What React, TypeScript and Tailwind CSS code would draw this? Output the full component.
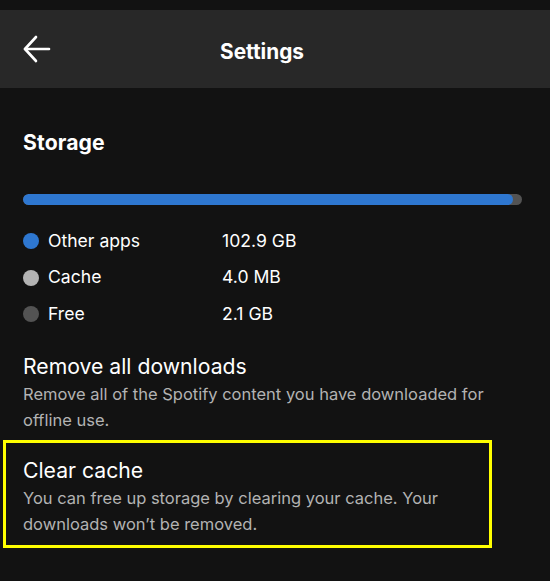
import React from "react";

type LegendItem = {
  color: string;
  label: string;
  value: string;
};

const legend: LegendItem[] = [
  { color: "bg-[#2e77d0]", label: "Other apps", value: "102.9 GB" },
  { color: "bg-[#b3b3b3]", label: "Cache", value: "4.0 MB" },
  { color: "bg-[#535353]", label: "Free", value: "2.1 GB" },
];

function BackArrow() {
  return (
    <svg width="30" height="30" viewBox="0 0 30 30" fill="none" stroke="white" strokeWidth="2.6" strokeLinecap="round" strokeLinejoin="round">
      <path d="M27 15H3" />
      <path d="M14 3L3 15l11 12" />
    </svg>
  );
}

export default function App() {
  return (
    <div className="w-[550px] h-[581px] bg-[#121212] overflow-hidden text-white" style={{ fontFamily: "Inter, 'Noto Sans', sans-serif" }}>
      <div className="h-[10px] bg-[#121212]" />

      <header className="relative h-[78px] bg-[#282828] flex items-center justify-center pr-[26px] pt-[5px]">
        <button className="absolute left-[22px] top-[24px]">
          <BackArrow />
        </button>
        <h1 className="text-[20.8px] font-bold">Settings</h1>
      </header>

      <section className="px-[23px] pt-[40px]">
        <h2 className="text-[21.2px] font-bold leading-[28px] tracking-[0.1px]">Storage</h2>

        <div className="mt-[38px] h-[11px] w-[499px] rounded-full bg-[#535353] overflow-hidden flex">
          <div className="h-full w-[490px] bg-[#2e77d0] rounded-full" />
        </div>

        <div className="mt-[24px] flex flex-col gap-[12.5px]">
          {legend.map((item) => (
            <div key={item.label} className="flex items-center h-[24px]">
              <span className={`w-[16px] h-[16px] rounded-full ${item.color}`} />
              <span className="ml-[9px] w-[174px] text-[17.6px]">{item.label}</span>
              <span className="text-[17.6px]">{item.value}</span>
            </div>
          ))}
        </div>

        <div className="mt-[26px]">
          <p className="text-[21.2px] leading-[28px]">Remove all downloads</p>
          <p className="mt-[1px] text-[16.5px] leading-[26px] text-[#b3b3b3] pr-[20px]">
            Remove all of the Spotify content you have downloaded for offline use.
          </p>
        </div>
      </section>

      <div className="ml-[3px] mt-[7px] w-[489px] h-[108px] border-[3px] border-[#ffff00] pl-[17px] pt-[13px]">
        <p className="text-[21.2px] leading-[28px]">Clear cache</p>
        <p className="mt-[1px] text-[16.5px] leading-[26px] text-[#b3b3b3] pr-[30px]">
          You can free up storage by clearing your cache. Your downloads won’t be removed.
        </p>
      </div>
    </div>
  );
}
